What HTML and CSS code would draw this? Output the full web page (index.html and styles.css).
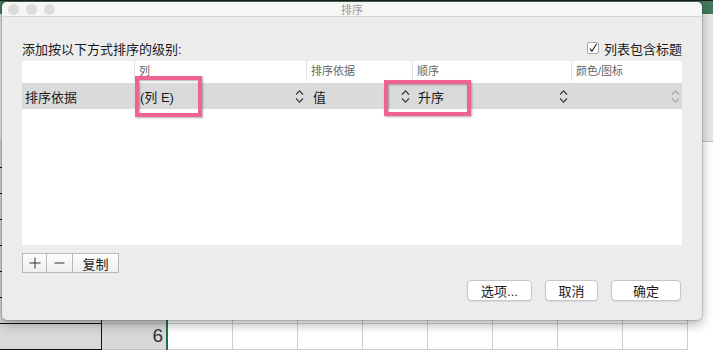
FILE: index.html
```html
<!DOCTYPE html>
<html lang="zh-CN">

<head>
  <meta charset="UTF-8">
  <title>排序</title>
  <link rel="stylesheet" href="styles.css">
</head>

<body>
  <div class="sheet">
    <div class="sheet-top"></div>
    <div class="ribbon"></div>
    <div class="sheet-head"></div>
    <div class="sheet-row head-row">
      <div class="corner"></div><div class="rownum"></div><div class="sel-line"></div>
      <div class="cell"></div><div class="cell"></div><div class="cell"></div><div class="cell"></div><div class="cell"></div><div class="cell"></div><div class="cell"></div><div class="cell"></div>
    </div>
    <div class="sheet-row head-row">
      <div class="corner"></div><div class="rownum"></div><div class="sel-line"></div>
      <div class="cell"></div><div class="cell"></div><div class="cell"></div><div class="cell"></div><div class="cell"></div><div class="cell"></div><div class="cell"></div><div class="cell"></div>
    </div>
    <div class="sheet-row">
      <div class="corner"></div><div class="rownum">1</div><div class="sel-line"></div>
      <div class="cell"></div><div class="cell"></div><div class="cell"></div><div class="cell"></div><div class="cell"></div><div class="cell"></div><div class="cell"></div><div class="cell"></div>
    </div>
    <div class="sheet-row">
      <div class="corner"></div><div class="rownum">2</div><div class="sel-line"></div>
      <div class="cell"></div><div class="cell"></div><div class="cell"></div><div class="cell"></div><div class="cell"></div><div class="cell"></div><div class="cell"></div><div class="cell"></div>
    </div>
    <div class="sheet-row">
      <div class="corner"></div><div class="rownum">3</div><div class="sel-line"></div>
      <div class="cell"></div><div class="cell"></div><div class="cell"></div><div class="cell"></div><div class="cell"></div><div class="cell"></div><div class="cell"></div><div class="cell"></div>
    </div>
    <div class="sheet-row">
      <div class="corner"></div><div class="rownum">4</div><div class="sel-line"></div>
      <div class="cell"></div><div class="cell"></div><div class="cell"></div><div class="cell"></div><div class="cell"></div><div class="cell"></div><div class="cell"></div><div class="cell"></div>
    </div>
    <div class="sheet-row">
      <div class="corner"></div><div class="rownum">5</div><div class="sel-line"></div>
      <div class="cell"></div><div class="cell"></div><div class="cell"></div><div class="cell"></div><div class="cell"></div><div class="cell"></div><div class="cell"></div><div class="cell"></div>
    </div>
    <div class="sheet-row">
      <div class="corner"></div><div class="rownum">6</div><div class="sel-line"></div>
      <div class="cell"></div><div class="cell"></div><div class="cell"></div><div class="cell"></div><div class="cell"></div><div class="cell"></div><div class="cell"></div><div class="cell"></div>
    </div>
  </div>

  <!-- sort dialog sits over the sheet -->
  <div class="dialog">
    <div class="titlebar">
      <div class="lights"><span></span><span></span><span></span></div>
      <div class="title">排序</div>
      <div></div>
    </div>

    <div class="dialog-body">
      <div class="head-line">
        <div class="caption">添加按以下方式排序的级别:</div>
        <div class="check">
          <span class="box">
            <svg width="10" height="10" viewBox="0 0 10 10"><path d="M1.8 5.6 L3.9 8.2 L8.6 0.8" fill="none" stroke="#222" stroke-width="1.1"/></svg>
          </span>
          列表包含标题
        </div>
      </div>

      <div class="levels">
        <div class="levels-head">
          <div class="hcell"></div>
          <div class="hcell">列</div>
          <div class="hcell">排序依据</div>
          <div class="hcell">顺序</div>
          <div class="hcell">颜色/图标</div>
        </div>
        <div class="level-row">
          <div class="lcell first">排序依据</div>
          <div class="lcell">
            <span>(列 E)</span>
            <svg class="updown" width="9" height="15" viewBox="0 0 9 15"><path d="M1 5.5 L4.5 1.8 L8 5.5 M1 9.5 L4.5 13.2 L8 9.5" fill="none" stroke="#3a3a3a" stroke-width="1.2"/></svg>
          </div>
          <div class="lcell">
            <span>值</span>
            <svg class="updown" width="9" height="15" viewBox="0 0 9 15"><path d="M1 5.5 L4.5 1.8 L8 5.5 M1 9.5 L4.5 13.2 L8 9.5" fill="none" stroke="#3a3a3a" stroke-width="1.2"/></svg>
          </div>
          <div class="lcell">
            <span>升序</span>
            <svg class="updown" width="9" height="15" viewBox="0 0 9 15"><path d="M1 5.5 L4.5 1.8 L8 5.5 M1 9.5 L4.5 13.2 L8 9.5" fill="none" stroke="#3a3a3a" stroke-width="1.2"/></svg>
          </div>
          <div class="lcell">
            <span></span>
            <svg class="updown" width="9" height="15" viewBox="0 0 9 15"><path d="M1 5.5 L4.5 1.8 L8 5.5 M1 9.5 L4.5 13.2 L8 9.5" fill="none" stroke="#a8a8a8" stroke-width="1.2"/></svg>
          </div>
        </div>
      </div>

      <div class="tools">
        <div class="tool plus">
          <svg width="12" height="12" viewBox="0 0 12 12"><path d="M6 0.5 V11.5 M0.5 6 H11.5" stroke="#333" stroke-width="1"/></svg>
        </div>
        <div class="tool minus">
          <svg width="11" height="12" viewBox="0 0 11 12"><path d="M0.5 6 H10.5" stroke="#333" stroke-width="1"/></svg>
        </div>
        <div class="tool copy">复制</div>
      </div>

      <div class="actions">
        <div class="btn btn-opt">选项...</div>
        <div class="btn btn-cancel">取消</div>
        <div class="btn btn-ok">确定</div>
      </div>
    </div>
  </div>

  <!-- annotation boxes -->
  <div class="mark mark-col"></div>
  <div class="mark mark-order"></div>
</body>

</html>
```

FILE: styles.css
```css
body {
  margin: 0;
  width: 713px;
  height: 350px;
  overflow: hidden;
  position: relative;
  background: #fff;
  font-family: "Liberation Sans", "Noto Sans CJK SC", sans-serif;
  color: #1a1a1a;
}

/* --- spreadsheet behind the dialog --- */
.sheet {
  display: flex;
  flex-direction: column;
  height: 350px;
  overflow: hidden;
}

.sheet-top {
  height: 2px;
  background: #1c1c1c;
}

.ribbon {
  height: 18px;
  background: #44795b;
}

.sheet-head {
  height: 128px;
  flex-shrink: 0;
  background: #e8e8e8;
  border-bottom: 1px solid #c4c4c4;
  box-sizing: border-box;
}

.sheet-row {
  display: flex;
  height: 26px;
  flex-shrink: 0;
  overflow: hidden;
}

.corner {
  width: 101px;
  flex-shrink: 0;
  background: #d9d9d9;
  border-right: 1px solid #111;
  border-bottom: 1px solid #111;
}

.rownum {
  width: 61px;
  flex-shrink: 0;
  padding-right: 3px;
  background: #d8d8d8;
  border-bottom: 1px solid #c2c2c2;
  text-align: right;
  font-size: 19px;
  line-height: 23px;
  color: #333;
}

.sel-line {
  width: 2px;
  flex-shrink: 0;
  background: #1e7145;
}

.cell {
  width: 64px;
  flex-shrink: 0;
  border-right: 1px solid #cfcfcf;
  border-bottom: 1px solid #cfcfcf;
}

.head-row .cell,
.head-row .rownum {
  background: #f7f7f7;
}

/* --- dialog --- */
.dialog {
  position: absolute;
  left: 2px;
  top: 2px;
  width: 700px;
  height: 318px;
  background: #ececec;
  border-radius: 5px;
  box-shadow: 0 0 0 1px rgba(0, 0, 0, 0.12), 0 4px 12px rgba(0, 0, 0, 0.32);
  overflow: hidden;
  display: flex;
  flex-direction: column;
}

.titlebar {
  height: 15px;
  box-sizing: border-box;
  display: grid;
  grid-template-columns: 1fr auto 1fr;
  align-items: center;
  background: #f6f6f6;
  border-bottom: 1px solid #d6d6d6;
}

.lights {
  display: flex;
  gap: 7px;
  padding-left: 6px;
}

.lights span {
  width: 11px;
  height: 11px;
  border-radius: 50%;
  background: #dcdcdc;
}

.title {
  font-size: 11px;
  line-height: 14px;
  color: #9c9c9c;
  font-family: "Noto Sans CJK SC", sans-serif;
}

.dialog-body {
  padding: 21px 20px 0 20px;
  display: flex;
  flex-direction: column;
}

.head-line {
  height: 20px;
  display: flex;
  align-items: center;
  justify-content: space-between;
  margin-bottom: 3px;
  font-size: 13px;
}

.check {
  display: flex;
  align-items: center;
  gap: 5px;
}

.box {
  width: 12px;
  height: 12px;
  box-sizing: border-box;
  background: #fff;
  border: 1px solid #a8a8a8;
  border-radius: 2px;
  display: flex;
  align-items: center;
  justify-content: center;
}

/* sort level table */
.levels {
  height: 184px;
  background: #fff;
}

.levels-head,
.level-row {
  display: grid;
  grid-template-columns: 112px 172px 106px 159px 111px;
}

.levels-head {
  height: 22px;
}

.hcell {
  font-size: 11px;
  color: #666;
  padding-left: 4px;
  line-height: 20px;
  margin-bottom: 3px;
  border-left: 1px solid #e0e0e0;
}

.hcell:first-child {
  border-left: none;
}

.level-row {
  height: 26px;
  background: #dadada;
  font-size: 13px;
}

.lcell {
  display: flex;
  align-items: center;
  justify-content: space-between;
  padding: 0 2px 0 6px;
}

.lcell.first {
  padding-left: 3px;
}

.lcell:nth-child(3) {
  padding-left: 7px;
}

.lcell:nth-child(4) {
  padding-right: 3px;
}

/* + - copy */
.tools {
  display: flex;
  margin-top: 8px;
  height: 20px;
}

.tool {
  height: 20px;
  box-sizing: border-box;
  border: 1px solid #b8b8b8;
  background: linear-gradient(#fdfdfd, #eeeeee);
  display: flex;
  align-items: center;
  justify-content: center;
  font-size: 13px;
  color: #222;
}

.tool + .tool {
  margin-left: -1px;
}

.plus {
  width: 25px;
}

.minus {
  width: 27px;
}

.copy {
  width: 47px;
}

.actions {
  display: flex;
  justify-content: flex-end;
  gap: 13px;
  margin-top: 7px;
  padding-right: 1px;
}

.btn {
  height: 21px;
  box-sizing: border-box;
  background: #fff;
  border: 1px solid #c6c6c6;
  border-radius: 4px;
  box-shadow: 0 1px 1px rgba(0, 0, 0, 0.08);
  display: flex;
  align-items: center;
  justify-content: center;
  font-size: 13px;
}

.btn-opt {
  width: 65px;
}

.btn-cancel {
  width: 53px;
}

.btn-ok {
  width: 70px;
}

/* pink highlight boxes */
.mark {
  position: absolute;
  box-sizing: border-box;
  border: 4px solid #ef6391;
  box-shadow: 1px 1px 2px rgba(0, 0, 0, 0.3), inset 1px 1px 2px rgba(0, 0, 0, 0.3);
}

.mark-col {
  left: 135px;
  top: 76px;
  width: 67px;
  height: 41px;
}

.mark-order {
  left: 384px;
  top: 80px;
  width: 87px;
  height: 36px;
}
```
